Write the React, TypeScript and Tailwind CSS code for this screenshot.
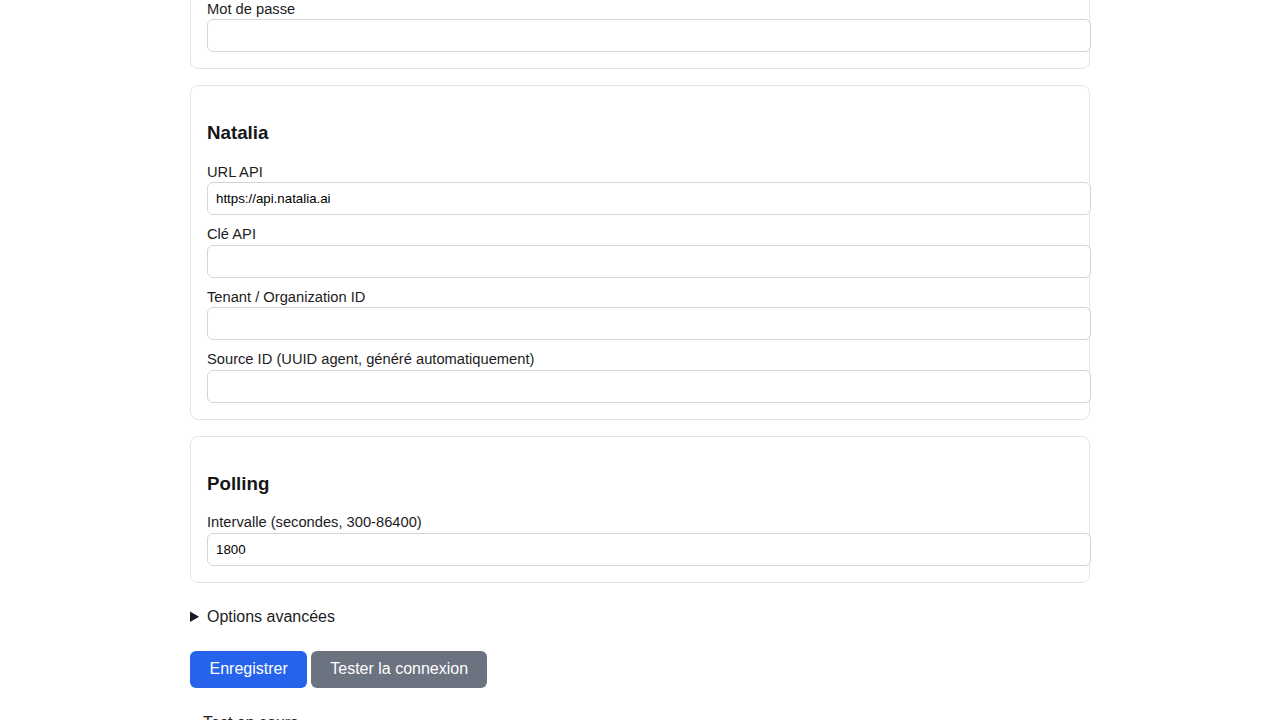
import React from "react";

type Field = { label: string; value?: string };

const natalia: Field[] = [
  { label: "URL API", value: "https://api.natalia.ai" },
  { label: "Clé API" },
  { label: "Tenant / Organization ID" },
  { label: "Source ID (UUID agent, généré automatiquement)" },
];

function Input({ label, value, first }: Field & { first?: boolean }) {
  return (
    <div className={first ? "" : "mt-[7.67px]"}>
      <label className="block pt-[1.5px] text-[14.7px] leading-[20px] text-[#1c1c1e]">{label}</label>
      <input
        defaultValue={value}
        className="mt-[0.5px] box-content block h-[15px] w-full rounded-[6px] border border-[#d4d4dc] bg-white px-2 py-2 text-[13.3px] leading-[15px] text-black outline-none"
      />
    </div>
  );
}

function Card({ title, children }: { title?: string; children: React.ReactNode }) {
  return (
    <section className="rounded-[8px] border border-[#e3e3e8] p-4">
      {title && (
        <h3 className="mt-[20px] mb-[16px] text-[18.72px] font-bold leading-[22px] text-[#161616]">{title}</h3>
      )}
      {children}
    </section>
  );
}

export default function App() {
  return (
    <div className="min-h-screen bg-white font-['Liberation_Sans',Arial,sans-serif] text-[#1c1c1e]">
      <div className="mx-auto w-[900px] -mt-[20px] flex flex-col gap-4">
        <Card>
          <Input label="Mot de passe" first />
        </Card>

        <Card title="Natalia">
          {natalia.map((f, i) => (
            <Input key={f.label} {...f} first={i === 0} />
          ))}
        </Card>

        <Card title="Polling">
          <Input label="Intervalle (secondes, 300-86400)" value="1800" first />
        </Card>
      </div>

      <div className="mx-auto w-[900px]">
        <details className="mt-[22px] text-[16px] leading-[24px]">
          <summary className="cursor-pointer">Options avancées</summary>
        </details>

        <div className="mt-[22px] flex gap-1">
          <button className="h-[37px] rounded-[6px] bg-[#2563eb] px-[19.5px] text-[16px] text-white">
            Enregistrer
          </button>
          <button className="h-[37px] rounded-[6px] bg-[#6b7280] px-[19px] text-[16px] text-white">
            Tester la connexion
          </button>
        </div>

        <p className="mt-[23px] pl-[13px] text-[16px] leading-[24px]">Test en cours...</p>
      </div>
    </div>
  );
}
